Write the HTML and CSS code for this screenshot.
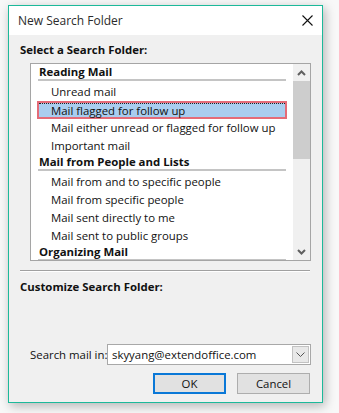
FILE: index.html
```html
<!DOCTYPE html>
<html lang="en">
<head>
    <meta charset="UTF-8">
    <meta name="viewport" content="width=device-width, initial-scale=1.0">
    <title>New Search Folder</title>
    <link rel="stylesheet" href="styles.css">
</head>
<body>
    <div class="dialog">
        <div class="titlebar">
            <span class="title">New Search Folder</span>
            <svg class="close" width="11" height="11" viewBox="0 0 11 11">
                <path d="M0.5 0.5 L10.5 10.5 M10.5 0.5 L0.5 10.5" stroke="#111" stroke-width="1.1" fill="none"/>
            </svg>
        </div>
        <div class="content">
            <div class="label">Select a Search Folder:</div>
            <div class="listbox">
                <div class="items">
                    <div class="group">Reading Mail</div>
                    <div class="item">Unread mail</div>
                    <div class="item selected">Mail flagged for follow up</div>
                    <div class="item">Mail either unread or flagged for follow up</div>
                    <div class="item">Important mail</div>
                    <div class="group">Mail from People and Lists</div>
                    <div class="item">Mail from and to specific people</div>
                    <div class="item">Mail from specific people</div>
                    <div class="item">Mail sent directly to me</div>
                    <div class="item">Mail sent to public groups</div>
                    <div class="group">Organizing Mail</div>
                </div>
                <div class="scrollbar">
                    <div class="arrow">
                        <svg width="9" height="6" viewBox="0 0 9 6"><path d="M1 5 L4.5 1.5 L8 5" stroke="#606060" stroke-width="2" fill="none"/></svg>
                    </div>
                    <div class="track"><div class="thumb"></div></div>
                    <div class="arrow">
                        <svg width="9" height="6" viewBox="0 0 9 6"><path d="M1 1 L4.5 4.5 L8 1" stroke="#606060" stroke-width="2" fill="none"/></svg>
                    </div>
                </div>
            </div>
            <div class="separator"></div>
            <div class="label">Customize Search Folder:</div>
            <div class="search-row">
                <span class="search-label">Search mail in:</span>
                <div class="combo">
                    <span class="combo-text">skyyang@extendoffice.com</span>
                    <div class="combo-btn">
                        <svg width="9" height="5" viewBox="0 0 9 5"><path d="M0.5 0.5 L4.5 4.5 L8.5 0.5" stroke="#555" stroke-width="1" fill="none"/></svg>
                    </div>
                </div>
            </div>
            <div class="buttons">
                <button class="btn default">OK</button>
                <button class="btn">Cancel</button>
            </div>
        </div>
    </div>
</body>
</html>
```

FILE: styles.css
```css
body {
    margin: 0;
    padding: 5px 0 0 8px;
    background-color: #f8f8f8;
    font-family: "Open Sans", "Liberation Sans", sans-serif;
    font-size: 11.4px;
    color: #111;
    height: 413px;
    box-sizing: border-box;
    overflow: hidden;
}

.dialog {
    width: 315px;
    height: 398px;
    box-sizing: border-box;
    border: 1px solid #1cb99a;
    background-color: #f0f0f0;
    box-shadow: 2px 3px 10px rgba(0, 0, 0, 0.28);
    display: flex;
    flex-direction: column;
}

.titlebar {
    height: 29px;
    background-color: #fff;
    display: flex;
    align-items: center;
    justify-content: space-between;
    padding: 0 9px 0 9px;
}
.title {
    font-size: 12px;
    color: #2b2b2b;
}
.close {
    display: block;
}

.content {
    flex: 1;
    padding: 0 12px 0 11px;
    display: flex;
    flex-direction: column;
}

.label {
    font-weight: bold;
    line-height: 16px;
    margin-top: 7px;
}

.listbox {
    margin: 5px 0 0 10px;
    width: 281px;
    height: 198px;
    box-sizing: border-box;
    border: 1px solid #a5a5a5;
    background-color: #fff;
    display: flex;
    overflow: hidden;
}
.items {
    flex: 1;
    padding-top: 1px;
}
.group {
    margin: 0 7px;
    padding-left: 1px;
    height: 14px;
    line-height: 14px;
    font-weight: bold;
    border-bottom: 2px solid #c4c4c4;
    margin-bottom: 2px;
}
.item {
    height: 18px;
    line-height: 18px;
    padding-left: 20px;
}
.item.selected {
    margin: 0 6px;
    line-height: 16px;
    padding-left: 12px;
    box-sizing: border-box;
    border: 2px solid #e46b78;
    background-color: #a9cdef;
    position: relative;
}
.item.selected::before {
    content: "";
    position: absolute;
    left: 0;
    right: 0;
    top: 0;
    border-top: 1px dotted #222;
}

.scrollbar {
    width: 17px;
    background-color: #f0f0f0;
    display: flex;
    flex-direction: column;
}
.arrow {
    height: 17px;
    display: flex;
    align-items: center;
    justify-content: center;
}
.track {
    flex: 1;
}
.thumb {
    height: 78px;
    background-color: #cdcdcd;
}

.separator {
    margin-top: 9px;
    height: 1px;
    background-color: #a0a0a0;
    border-bottom: 1px solid #fff;
}

.search-row {
    margin: 49px 0 0 10px;
    display: flex;
    align-items: center;
    height: 21px;
}
.search-label {
    flex: none;
    width: 77px;
    white-space: nowrap;
}
.combo {
    flex: none;
    width: 204px;
    height: 21px;
    box-sizing: border-box;
    border: 1px solid #a8a8a8;
    background-color: #fff;
    display: flex;
    align-items: center;
    justify-content: space-between;
    padding: 0 1px 0 4px;
}
.combo-text {
    white-space: nowrap;
}
.combo-btn {
    width: 17px;
    height: 17px;
    box-sizing: border-box;
    border: 1px solid #c2c2c2;
    background-color: #e8e8e8;
    display: flex;
    align-items: center;
    justify-content: center;
}

.buttons {
    margin-top: 8px;
    display: flex;
    justify-content: flex-end;
    gap: 11px;
}
.btn {
    width: 73px;
    height: 21px;
    box-sizing: border-box;
    border: 1px solid #adadad;
    background-color: #e1e1e1;
    font-family: inherit;
    font-size: 11.4px;
    color: #111;
    padding: 0;
}
.btn.default {
    border: 2px solid #0a78d7;
}
```
